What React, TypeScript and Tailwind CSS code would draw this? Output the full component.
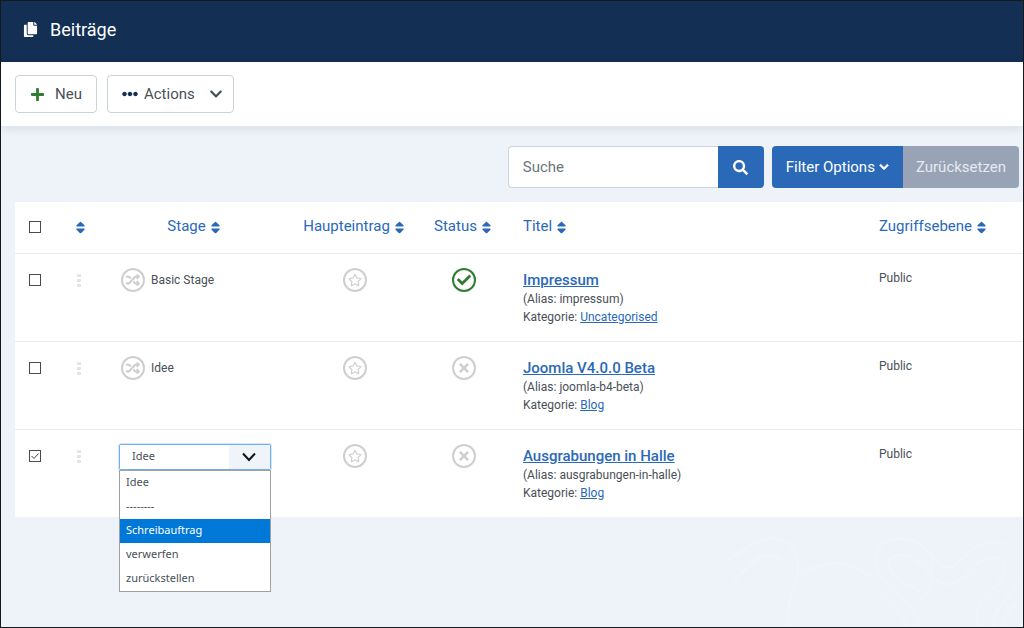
import React from 'react';
import {
  FaCheck,
  FaChevronDown,
  FaCopy,
  FaEllipsisH,
  FaPlus,
  FaRandom,
  FaRegStar,
  FaSearch,
  FaSort,
  FaTimes
} from 'react-icons/fa';

const articles = [
  {
    title: "Impressum",
    alias: "impressum",
    category: "Uncategorised",
    stage: "Basic Stage",
    access: "Public",
    published: true,
    selected: false
  },
  {
    title: "Joomla V4.0.0 Beta",
    alias: "joomla-b4-beta",
    category: "Blog",
    stage: "Idee",
    access: "Public",
    published: false,
    selected: false
  },
  {
    title: "Ausgrabungen in Halle",
    alias: "ausgrabungen-in-halle",
    category: "Blog",
    stage: "Idee",
    access: "Public",
    published: false,
    selected: true
  }
];

const transitions = ["Idee", "--------", "Schreibauftrag", "verwerfen", "zurückstellen"];

function Checkbox({ label, checked = false }: { label: string; checked?: boolean }) {
  return (
    <label className="grid w-3 h-3 bg-white">
      <input
        type="checkbox"
        aria-label={label}
        defaultChecked={checked}
        className="peer col-start-1 row-start-1 w-3 h-3 appearance-none border border-[#4a4a4a]"
      />
      <svg
        viewBox="0 0 12 12"
        className="invisible peer-checked:visible pointer-events-none col-start-1 row-start-1 w-3 h-3"
        fill="none"
        stroke="#444"
      >
        <path d="M2.5 6 L5 8.5 L9.5 3.5" />
      </svg>
    </label>
  );
}

function SortLink({ label }: { label?: string }) {
  return (
    <a href="#sort" aria-label={label ? undefined : "Reihenfolge"} className="inline-flex items-center gap-0.5 align-middle text-[#2a69b8]">
      {label}
      <FaSort size={15} />
    </a>
  );
}

function RoundButton({ label, active = false, children }: { label: string; active?: boolean; children: React.ReactNode }) {
  return (
    <button
      type="button"
      aria-label={label}
      className={`inline-flex items-center justify-center w-6 h-6 rounded-full border-2 shrink-0 ${active ? 'border-[#2f7d32] text-[#2f7d32]' : 'border-[#cfcfcf] text-[#cfcfcf]'}`}
    >
      {children}
    </button>
  );
}

function StageSelect() {
  return (
    <div className="relative w-38 font-['Noto_Sans',sans-serif] text-[11px]">
      <div className="grid rounded-xs border border-[#6fb0f5] ring-1 ring-[#d6e7fa] bg-white">
        <select
          aria-label="Stage"
          defaultValue="Idee"
          className="col-start-1 row-start-1 h-6 appearance-none bg-linear-to-r from-white from-73% to-[#eff4fa] to-73% pl-3 outline-none"
        >
          {transitions.map((name) => (
            <option key={name}>{name}</option>
          ))}
        </select>
        <svg
          viewBox="0 0 14 9"
          className="col-start-1 row-start-1 w-3.5 h-2.5 mr-3.5 self-center justify-self-end pointer-events-none"
          fill="none"
          stroke="#111"
          strokeWidth="2"
        >
          <path d="M1 1 L7 7.5 L13 1" />
        </svg>
      </div>
      <ul role="listbox" aria-label="Stage" className="absolute top-full left-0 z-10 w-full border border-[#a0a0a0] bg-white">
        {transitions.map((name) => (
          <li
            key={name}
            role="option"
            aria-selected={name === "Schreibauftrag"}
            className={`flex items-center h-6 px-1.5 ${name === "Schreibauftrag" ? 'bg-[#0078d7] text-white' : ''}`}
          >
            {name}
          </li>
        ))}
      </ul>
    </div>
  );
}

function DragHandle() {
  return (
    <svg width="4" height="14" viewBox="0 0 4 14" fill="#e4e4e4" className="ml-5.5">
      <rect width="4" height="3" />
      <rect y="5" width="4" height="3" />
      <rect y="10" width="4" height="3" />
    </svg>
  );
}

function Backdrop() {
  return (
    <svg
      width="300"
      height="112"
      viewBox="0 0 300 112"
      className="absolute right-0 bottom-0 pointer-events-none"
      fill="none"
      stroke="#f1f5fa"
      strokeWidth="2"
      aria-hidden="true"
    >
      <path d="M0 48 L25 32 Q50 16 67 30 Q82 48 70 75 Q64 90 66 112" />
      <path d="M10 66 L35 43 Q48 36 60 46" />
      <path d="M80 58 Q115 36 148 62" />
      <path d="M197 112 Q196 99 180 84 L164 70 Q144 46 158 30 Q182 16 203 34 L208 40 Q212 80 197 84" />
      <path d="M182 112 Q184 106 174 96 L156 78" />
      <path d="M200 78 L172 62 Q158 45 176 40 Q190 38 207 59 Q224 78 240 62 L258 46 Q270 38 280 46 Q286 60 270 74 Q250 90 254 112" />
      <path d="M208 42 L222 53 Q230 54 238 45 L250 34 Q265 22 284 30" />
      <path d="M270 112 Q270 96 284 84 L298 66 M280 112 Q280 99 296 86" />
    </svg>
  );
}

export default function App() {
  return (
    <div className="relative flex flex-col min-h-screen border border-[#15191f] bg-[#eef3fa] font-[Roboto,sans-serif] text-[#495057]">
      <Backdrop />

      <header className="flex items-center gap-3 bg-[#132f53] pt-4 pb-5 px-5.5 text-white">
        <FaCopy size={15} />
        <h1 className="text-lg leading-[25px]">Beiträge</h1>
      </header>

      <div className="flex gap-2.5 bg-white px-3.5 py-3 text-[15px] shadow-[0_2px_10px_rgba(0,0,0,0.1)]">
        <button type="button" className="flex items-center gap-2.5 h-9.5 my-px px-3.5 rounded-sm border border-[#c8d3d6]">
          <FaPlus size={15} className="text-[#2f7d32]" />
          Neu
        </button>
        <button type="button" className="flex items-center h-9.5 my-px px-3.5 rounded-sm border border-[#c8d3d6]">
          <FaEllipsisH size={16} className="mr-1.5 text-[#132f53]" />
          Actions
          <FaChevronDown size={14} className="ml-3.5 -mr-1" />
        </button>
      </div>

      <main className="relative pl-3.5">
        <form className="flex justify-end gap-2 pt-5 pb-3.5 pr-1 text-[15px]">
          <div className="flex">
            <input
              type="text"
              aria-label="Suche"
              placeholder="Suche"
              className="w-52.5 h-10.5 pl-3.5 rounded-l-sm border border-r-0 border-[#ced4da] bg-white outline-none placeholder:text-[#6c757d]"
            />
            <button type="button" aria-label="Suchen" className="flex items-center justify-center w-11.5 rounded-r-sm bg-[#2a69b8] text-white">
              <FaSearch size={15} />
            </button>
          </div>
          <div className="flex">
            <button type="button" className="flex items-center gap-1 px-3.5 rounded-l-sm bg-[#2a69b8] text-white">
              Filter Options
              <FaChevronDown size={10} stroke="currentColor" strokeWidth={40} />
            </button>
            <button type="button" className="px-[13px] rounded-r-sm bg-[#98a4b5] text-[#e6eaf0]">
              Zurücksetzen
            </button>
          </div>
        </form>

        <table className="w-full table-fixed bg-white text-xs">
          <colgroup>
            <col className="w-10" />
            <col className="w-12.5" />
            <col className="w-45" />
            <col className="w-35" />
            <col className="w-19.5" />
            <col />
            <col className="w-41" />
          </colgroup>
          <thead>
            <tr className="h-[51px] border-b border-[#e6ecef] text-[15px] text-center">
              <th className="pl-3.5"><Checkbox label="Alle auswählen" /></th>
              <th><SortLink /></th>
              <th className="font-normal"><SortLink label="Stage" /></th>
              <th className="font-normal"><SortLink label="Haupteintrag" /></th>
              <th className="font-normal"><SortLink label="Status" /></th>
              <th className="pl-5 text-left font-normal"><SortLink label="Titel" /></th>
              <th className="pl-5 text-left font-normal"><SortLink label="Zugriffsebene" /></th>
            </tr>
          </thead>
          <tbody>
            {articles.map((article) => (
              <tr key={article.title} className="h-22 border-b border-[#e6ecef] last:border-b-0 align-top">
                <td className="pl-3.5 pt-5"><Checkbox label={article.title} checked={article.selected} /></td>
                <td className="pt-5"><DragHandle /></td>
                <td className="pt-3.5 pl-3.5">
                  {article.selected ? (
                    <StageSelect />
                  ) : (
                    <div className="flex items-center gap-1.5 pl-0.5">
                      <RoundButton label="Stage ändern"><FaRandom size={14} /></RoundButton>
                      {article.stage}
                    </div>
                  )}
                </td>
                <td className="pt-3.5 text-center">
                  <RoundButton label="Haupteintrag"><FaRegStar size={14} /></RoundButton>
                </td>
                <td className="pt-3.5 text-center">
                  <RoundButton label="Status" active={article.published}>
                    {article.published ? <FaCheck size={14} /> : <FaTimes size={14} />}
                  </RoundButton>
                </td>
                <td className="pt-4 pl-5">
                  <a href="#article" className="block w-fit text-[15px] leading-5 font-medium text-[#2a69b8] underline">{article.title}</a>
                  <div className="leading-[18px]">(Alias: {article.alias})</div>
                  <div className="leading-[18px]">
                    Kategorie: <a href="#category" className="text-[#2a69b8] underline">{article.category}</a>
                  </div>
                </td>
                <td className="pt-4 pl-5">{article.access}</td>
              </tr>
            ))}
          </tbody>
        </table>
      </main>
    </div>
  );
}
